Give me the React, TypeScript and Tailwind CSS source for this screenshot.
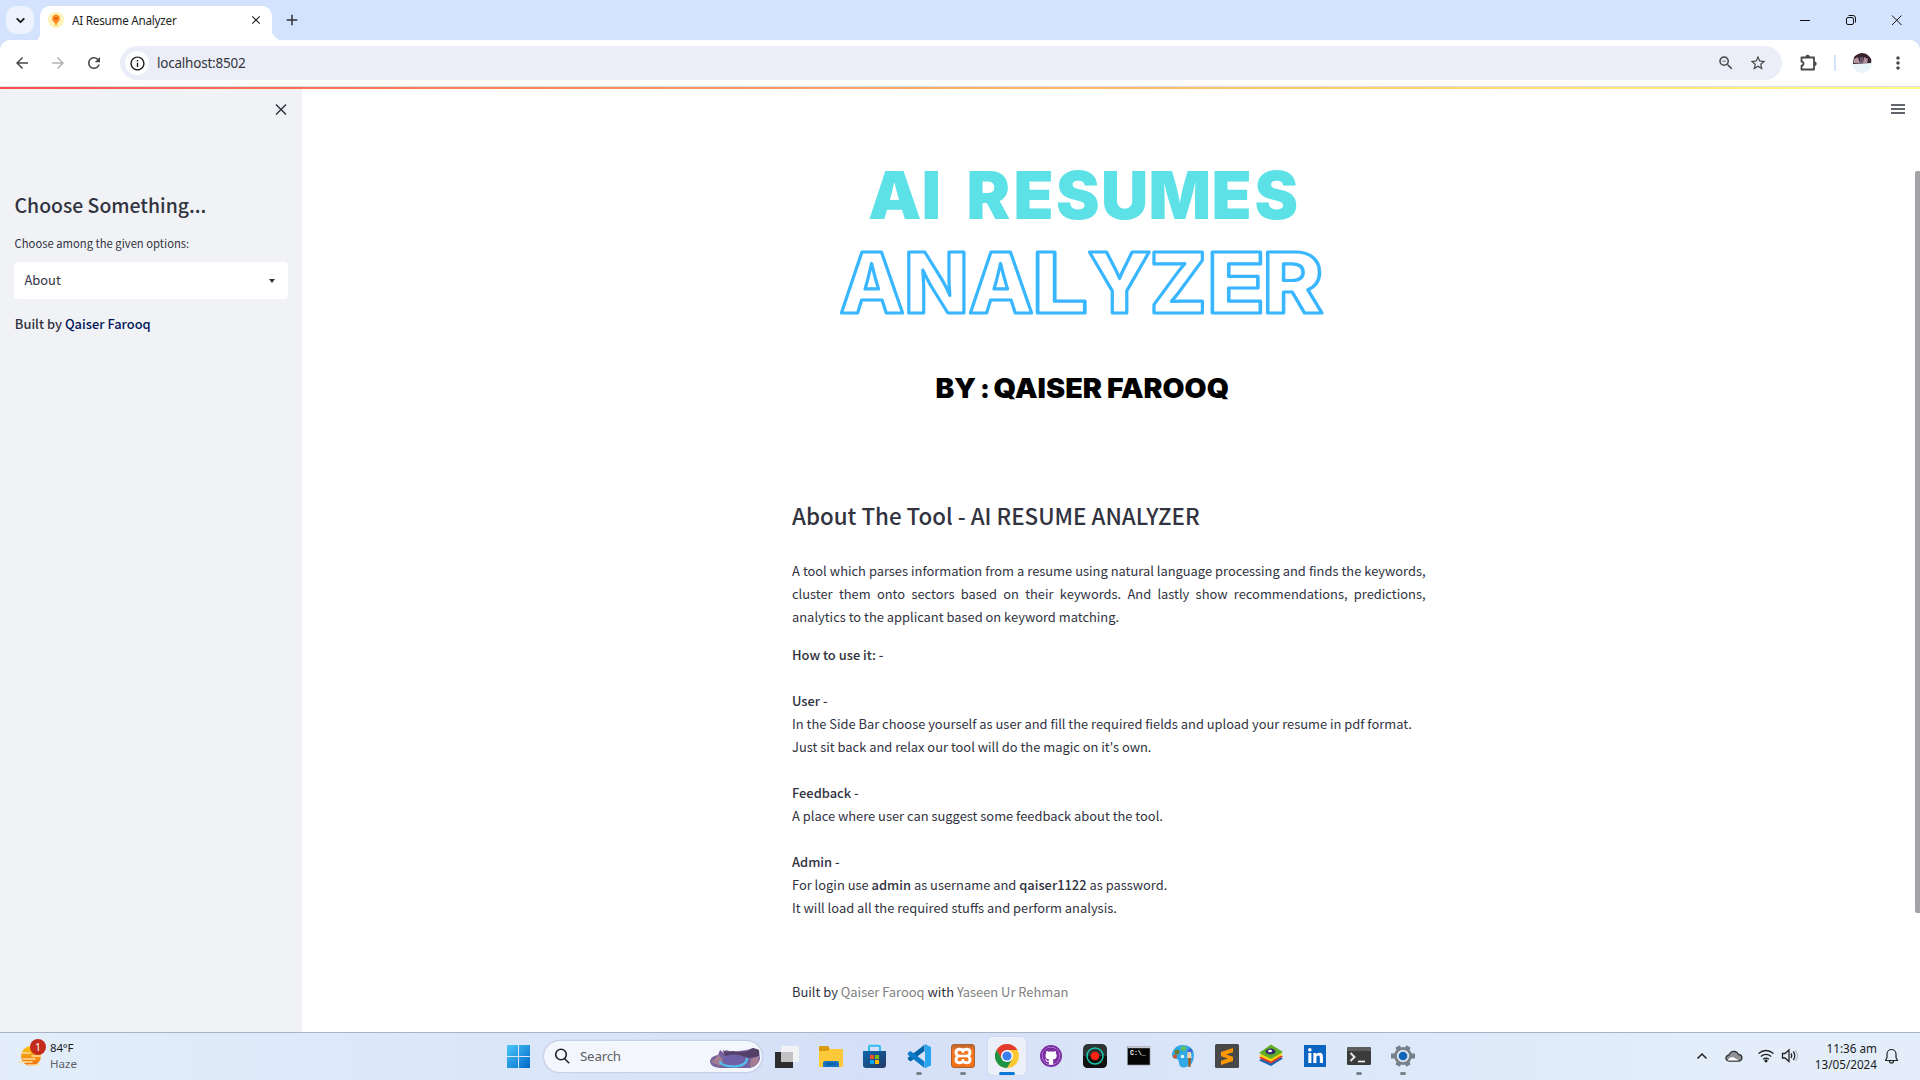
import { type ReactNode } from "react";
import { ChevronDown } from "lucide-react";
import { MdArrowBack, MdArrowForward, MdRefresh, MdClose, MdInfoOutline, MdStarBorder, MdZoomOut, MdMoreVert, MdAdd } from "react-icons/md";
import { FaGithub, FaLinkedinIn } from "react-icons/fa";

function TabStrip() {
  return (
    <div className="flex h-10 flex-none items-start bg-[#d3e3fd]">
      <div className="ml-1.5 mt-1.5 flex h-7 w-7 items-center justify-center rounded-[10px] bg-[#ecf3fe]">
        <ChevronDown className="h-[13px] w-[13px] text-[#1f1f1f]" strokeWidth={3.5} />
      </div>
      <div className="mt-[30px] h-2.5 w-1.5 rounded-br-[10px] bg-[#d3e3fd] shadow-[4px_4px_0_0_#fff]" />
      <div className="mt-1.5 flex h-[34px] w-[232px] items-center rounded-t-[10px] bg-white pb-1.5 pl-2">
        <svg className="h-4 w-4" viewBox="0 0 16 16">
          <circle cx="8" cy="8" r="8" fill="#fff2b8" />
          <path d="M8 2.500a4 4 0 0 0-2.300 7.200l.6 1.300h3.400l.6-1.300A4 4 0 0 0 8 2.500z" fill="#fb8c1e" />
          <path d="M6.200 5.500h3.600v2H6.200z" fill="#e8531f" />
          <path d="M6.600 11h2.800v1.600L8 13.800l-1.400-1.200z" fill="#fbb03b" />
        </svg>
        <span className="ml-2 flex-none pt-0.5 text-[11.700px] tracking-[-0.240px] text-[#1f1f1f]">AI Resume Analyzer</span>
        <span className="flex-1" />
        <MdClose className="mr-[9px] h-3.5 w-3.5 text-[#1f1f1f]" />
      </div>
      <div className="mt-[30px] h-2.5 w-2.5 rounded-bl-[10px] bg-[#d3e3fd] shadow-[-4px_4px_0_0_#fff]" />
      <MdAdd className="ml-px mt-[11px] h-[18px] w-[18px] text-[#303030]" />
      <div className="flex-1" />
      <svg className="mt-[10px] h-[20px] w-[120px]" viewBox="1790 10 120 20" fill="none" stroke="#111" strokeWidth="1">
        <path d="M1800 20.500h10" />
        <rect x="1846.500" y="17.500" width="7" height="7" rx="1.500" />
        <path d="M1848.500 15.500h4.500a2.500 2.500 0 0 1 2.500 2.500v4.500" />
        <path d="M1892 15.500l9.500 9.500M1901.500 15.500l-9.500 9.500" />
      </svg>
      <div className="w-[10px]" />
    </div>
  );
}

function Toolbar() {
  return (
    <div className="flex-none bg-[#d3e3fd]">
      <div className="flex h-[46px] items-center rounded-t-[10px] bg-white">
        <MdArrowBack className="ml-[13px] h-[18px] w-[18px] text-[#474747]" />
        <MdArrowForward className="ml-[18px] h-[18px] w-[18px] text-[#b4b4b4]" />
        <MdRefresh className="ml-[18px] h-[18px] w-[18px] text-[#474747]" />
        <div className="ml-[17px] flex h-[34px] w-[1662px] items-center rounded-full bg-[#ebeef8] pl-[5px]">
          <div className="flex h-6 w-6 items-center justify-center rounded-full bg-white">
            <MdInfoOutline className="h-[17px] w-[17px] text-[#1f1f1f]" />
          </div>
          <span className="ml-2 text-[13.500px] tracking-[-0.220px] text-[#34363b]">localhost:8502</span>
          <span className="flex-1" />
          <MdZoomOut className="mr-[14px] h-[18px] w-[18px] text-[#474747]" />
          <MdStarBorder className="mr-[15px] h-[18px] w-[18px] text-[#474747]" />
        </div>
        <svg className="ml-[16px] h-5 w-5" viewBox="0 0 20 20">
          <path d="M3.500 4.500H16V9.500V16.500H3.500V12.600A2 2 0 0 0 3.500 8.500Z" fill="none" stroke="#474747" strokeWidth="1.800" strokeLinejoin="round" />
          <path d="M7.500 4a2.200 2.200 0 0 1 4.400 0zM16.500 8.500a2.200 2.200 0 0 1 0 4.400z" fill="#474747" />
        </svg>
        <div className="ml-[16px] h-4 w-[2px] bg-[#d3e3fd]" />
        <svg className="ml-4 h-5 w-5" viewBox="0 0 20 20">
          <defs><clipPath id="avatar"><circle cx="10" cy="10" r="10" /></clipPath></defs>
          <g clipPath="url(#avatar)">
            <path d="M0 0h20v20H0z" fill="#e9f5f8" />
            <path d="M1 11L2 3 8 0h6l6 6-1 4z" fill="#38202c" />
            <path d="M2 6l4-2 2 6H2zM12 4l4 2-1 4h-4z" fill="#b4909a" />
            <path d="M8 4h3v6H8z" fill="#665771" />
          </g>
        </svg>
        <MdMoreVert className="ml-4 h-5 w-5 text-[#474747]" />
      </div>
      <div className="h-px bg-[#d8dde6]" />
    </div>
  );
}

function Sidebar() {
  return (
    <aside className="flex w-[302px] flex-none flex-col bg-[#f0f2f6] pl-3.5 pr-3.5 text-[#31333f]">
      <div className="flex h-[42px] items-center justify-end">
        <svg className="mb-px h-[13px] w-[13px]" viewBox="0 0 13 13" stroke="#31333f" strokeWidth="1.500"><path d="M1 1.500l10 10M11 1.500l-10 10" /></svg>
      </div>
      <h2 className="mt-[60px] self-start pl-[0.600px] text-[19.400px] leading-[28px] font-medium">Choose Something...</h2>
      <div className="mt-[14px] self-start pl-[0.600px] text-[11.250px] leading-[20px]">Choose among the given options:</div>
      <div className="mt-[9px] flex h-[37px] items-center justify-between rounded-[4px] bg-white pl-[10.500px] pr-[13px]">
        <span className="pb-0.5 text-[12.900px] leading-[23px]">About</span>
        <span className="h-0 w-0 border-x-[3.500px] border-t-[4px] border-x-transparent border-t-[#31333f]" />
      </div>
      <div className="mt-[13px] self-start pl-[0.800px] text-[12.900px] leading-[23px] font-medium">Built by <span className="text-[#021659]">Qaiser Farooq</span></div>
    </aside>
  );
}

function Banner() {
  return (
    <svg className="block h-[310px] w-[634px]" viewBox="792 130 634 310" fontFamily="Inter, sans-serif">
      <g fill="#5ce1e6" fontSize="65.500" fontWeight="900">
        <text x="868" y="218.700" textLength="73" lengthAdjust="spacingAndGlyphs">AI</text>
        <text x="966.500 1013.500 1056 1101 1148.500 1211.500 1254.500" y="218.700">RESUMES</text>
      </g>
      <g fontSize="84.500" fontWeight="800" fill="none" stroke="#38b6ff" strokeWidth="3.200" strokeLinejoin="round">
        <text x="839.500 904 968.500" y="312.800">ANA</text>
        <text x="1032" y="312.800" textLength="56" lengthAdjust="spacingAndGlyphs">L</text>
        <text x="1087.500 1149.500" y="312.800">YZ</text>
        <text x="1207" y="312.800" textLength="58" lengthAdjust="spacingAndGlyphs">E</text>
        <text x="1262.500" y="312.800" textLength="61" lengthAdjust="spacingAndGlyphs">R</text>
      </g>
      <g fontSize="26.500" fontWeight="900" fill="#000">
        <text x="935.500" y="397.700" textLength="40.500" lengthAdjust="spacingAndGlyphs">BY</text>
        <text x="980" y="397.700">:</text>
        <text x="993.500" y="397.700" textLength="108.500" lengthAdjust="spacingAndGlyphs">QAISER</text>
        <text x="1107" y="397.700" textLength="122" lengthAdjust="spacingAndGlyphs">FAROOQ</text>
      </g>
    </svg>
  );
}

function Line({ bold, children }: { bold?: boolean; children?: ReactNode }) {
  return <div className={bold ? "h-[23px] font-medium" : "h-[23px]"}>{children}</div>;
}

function Article() {
  return (
    <main className="flex flex-1">
      <div className="ml-[490px] flex w-[634px] flex-col pt-[41px] text-[12.900px] leading-[23px] whitespace-nowrap text-[#31333f]">
        <Banner />
        <h3 className="mt-[59px] text-[22.350px] leading-[32px] font-medium">About The Tool - AI RESUME ANALYZER</h3>
        <div className="mt-[28px] w-[633.500px]">
          <div className="h-[23px] text-justify tracking-[-0.020px] [text-align-last:justify]">A tool which parses information from a resume using natural language processing and finds the keywords,</div>
          <div className="h-[23px] text-justify [text-align-last:justify]">cluster them onto sectors based on their keywords. And lastly show recommendations, predictions,</div>
          <Line>analytics to the applicant based on keyword matching.</Line>
        </div>
        <div className="mt-[15px]">
          <Line bold>How to use it: -</Line>
          <Line />
          <Line bold>User -</Line>
          <Line>In the Side Bar choose yourself as user and fill the required fields and upload your resume in pdf format.</Line>
          <Line>Just sit back and relax our tool will do the magic on it's own.</Line>
          <Line />
          <Line bold>Feedback -</Line>
          <Line>A place where user can suggest some feedback about the tool.</Line>
          <Line />
          <Line bold>Admin -</Line>
          <Line>For login use <b className="font-medium">admin</b> as username and <b className="font-medium">qaiser1122</b> as password.</Line>
          <Line>It will load all the required stuffs and perform analysis.</Line>
        </div>
        <div className="mt-[61px]">
          <Line>Built by <span className="text-[#808080]">Qaiser Farooq</span> with <span className="text-[#808080]">Yaseen Ur Rehman</span></Line>
        </div>
      </div>
      <div className="flex-1" />
      <svg className="mt-[12px] mr-[9px] h-4 w-4" viewBox="0 0 16 16" stroke="#31333f" strokeWidth="1.500"><path d="M1 4h14M1 8h14M1 12h14" /></svg>
      <div className="w-[5px] flex-none pt-[82px]"><div className="h-[742px] w-[5px] rounded-l-[2px] bg-[#a3a4a8]" /></div>
    </main>
  );
}

function TaskButton({ children, running, active }: { children: ReactNode; running?: boolean; active?: boolean }) {
  return (
    <div className="flex w-11 flex-none justify-center">
      <div className={active ? "flex h-[38px] w-[38px] flex-col items-center rounded bg-[#ecf0fa] pt-[7px] shadow-[0_0_1px_#9aa5bd]" : "flex h-[38px] w-[38px] flex-col items-center pt-[7px]"}>
        {children}
        {running && <div className="mt-[4px] h-[3px] w-[6px] flex-none rounded-full bg-[#7c828c]" />}
        {active && <div className="mt-[4px] h-[3px] w-4 flex-none rounded-full bg-[#0a78d4]" />}
      </div>
    </div>
  );
}

function Ico({ children }: { children: ReactNode }) {
  return <svg className="h-6 w-6 flex-none" viewBox="0 0 24 24">{children}</svg>;
}

function Taskbar() {
  return (
    <footer className="flex h-12 flex-none items-center border-t border-[#a9b3c6] bg-linear-to-r from-[#e3eefa] from-0% via-[#d5e0f8] via-45% to-[#e3eefa] to-90% pb-px">
      <div className="flex w-[496px] items-center">
        <svg className="mb-[6px] ml-[18px] h-7 w-7" viewBox="0 0 28 28">
          <defs><linearGradient id="sun" x2="0" y2="1"><stop stopColor="#fcc419" /><stop offset="1" stopColor="#ef6c0c" /></linearGradient></defs>
          <circle cx="13" cy="17" r="10" fill="url(#sun)" />
          <path d="M4 14h8M14 17h9M5 20h12M1 23h13M10 26h11" stroke="#fbe0a0" strokeWidth="1.400" strokeLinecap="round" />
          <circle cx="20" cy="8" r="8" fill="#c42b1c" />
          <text x="20" y="12" fontSize="10.500" textAnchor="middle" fill="#fff">1</text>
        </svg>
        <div className="ml-1 text-[11.500px] leading-4 text-[#1b1b1b]">
          <div className="tracking-[-0.200px]">84°F</div>
          <div className="text-[#5d6167]">Haze</div>
        </div>
      </div>
      <div className="flex w-[48px]">
        <svg className="ml-[10px] h-6 w-6" viewBox="0 0 24 24">
          <defs><linearGradient id="win" x2="1" y2="1"><stop stopColor="#4cc8f8" /><stop offset="1" stopColor="#0067c8" /></linearGradient></defs>
          <path d="M1 1h11v11H1zM13 1h11v11H13zM1 13h11v11H1zM13 13h11v11H13z" fill="url(#win)" />
        </svg>
      </div>
      <div className="flex h-[31px] w-[218px] items-center rounded-full bg-[#f3f6fd] pl-[10px] shadow-[0_0_2px_#8d9cb8]">
        <svg className="h-4 w-4" viewBox="0 0 16 16" fill="none" stroke="#222" strokeWidth="1.600"><circle cx="7" cy="6.500" r="5.300" /><path d="M10.700 10.700l4 4" strokeLinecap="round" /></svg>
        <span className="ml-[10px] pt-px text-[13.300px] tracking-[-0.200px] text-[#5d5f63]">Search</span>
        <span className="flex-1" />
        <svg className="mr-[1px] mt-1 h-[22px] w-[52px]" viewBox="0 0 52 22">
          <path d="M1 14q1-5 8-6l2-5 4 3 2-3 7 2 6-1 8-1 6-2 6 2 1 9q-2 7-10 9H14Q1 21 1 14z" fill="#77649f" />
          <path d="M14 3l4 2 6-1 6 1 9-1 5-3 6 2v6l-9 2-13-3-12 1z" fill="#554067" />
          <path d="M2 15l8-7 4 5-3 6zM42 12l8-3-1 7-8 5z" fill="#a77d93" />
          <ellipse cx="25" cy="12.500" rx="11" ry="5" fill="#6d5fa8" />
          <path d="M11 14q0 5 14 5.500 13-.5 13-8.500" fill="none" stroke="#4ec4f4" strokeWidth="2" />
        </svg>
      </div>
      <div className="ml-[3px] flex">
        <TaskButton><Ico><path d="M0 8h18v16H0z" fill="#2d2d2d" /><path d="M6 2h18v16H6z" fill="#f1f2f4" /><path d="M6 8h12v10H6z" fill="#c2c2c4" /></Ico></TaskButton>
        <TaskButton><Ico><path d="M0 3q0-1 1-1h8l2 3h12q1 0 1 1v17H0z" fill="#fdc938" /><path d="M0 3q0-1 1-1h8l1.500 2.500L9 7H0z" fill="#d99a0e" /><path d="M4 23v-4q0-2 2-2h12q2 0 2 2v4z" fill="#1673c0" /><path d="M7 20h10" stroke="#0c549a" strokeWidth="1.500" /></Ico></TaskButton>
        <TaskButton><Ico>
          <defs><linearGradient id="store" x2="1" y2="1"><stop stopColor="#0b66ae" /><stop offset="1" stopColor="#243a63" /></linearGradient></defs>
          <path d="M6 8V3q0-1.200 1.200-1.200h8.600q1.200 0 1.200 1.200v5" fill="none" stroke="#32bdf2" strokeWidth="2" /><path d="M0 7h23v14q0 3-3 3H3q-3 0-3-3z" fill="url(#store)" />
          <path d="M7 11h4v4H7z" fill="#f25022" /><path d="M12 11h4v4h-4z" fill="#7fba00" /><path d="M7 16h4v4H7z" fill="#00a4ef" /><path d="M12 16h4v4h-4z" fill="#ffb900" />
        </Ico></TaskButton>
        <TaskButton running><Ico><path d="M17.500 7L3.500 17.500.8 15.300v-1.500L17.500.800z" fill="#0065a9" /><path d="M17.500 17.500L3.500 7 .8 9v1.700L17.500 24z" fill="#0a7bc8" /><path d="M17 .5q.6-.5 1.300-.2L24 3v18.500l-5.700 2.600q-.7.200-1.300-.4l1-.7V1z" fill="#29a4ee" /></Ico></TaskButton>
        <TaskButton running><Ico>
          <defs><linearGradient id="xampp" x2="0" y2="1"><stop stopColor="#b8602e" /><stop offset=".25" stopColor="#f07a2a" /><stop offset="1" stopColor="#f56f14" /></linearGradient></defs>
          <rect x=".5" y=".5" width="23" height="23" rx="2.500" fill="url(#xampp)" stroke="#b0602a" />
          <path d="M12 7.500Q11.500 5.200 8.500 5.200 5 5.200 5 8.500 5 11 7.500 12 5 13 5 15.500 5 18.800 8.500 18.800 11.500 18.800 12 16.500 12.500 18.800 15.500 18.800 19 18.800 19 15.500 19 13 16.500 12 19 11 19 8.500 19 5.200 15.500 5.200 12.500 5.200 12 7.500z" fill="none" stroke="#fff" strokeWidth="2.900" strokeLinejoin="round" />
          <path d="M7.500 12h9" stroke="#fff" strokeWidth="2.500" />
        </Ico></TaskButton>
        <TaskButton active><Ico>
          <circle cx="12" cy="12" r="12" fill="#fcc934" />
          <path d="M12 6h10.400A12 12 0 0 0 1.600 6L6.800 15z" fill="#e33b2e" />
          <path d="M1.600 6A12 12 0 0 0 12 24l5.200-9L12 17 6.800 15z" fill="#1e9346" />
          <circle cx="12" cy="12" r="6" fill="#fff" /><circle cx="12" cy="12" r="4.600" fill="#3a7ff0" />
        </Ico></TaskButton>
        <TaskButton><div className="flex h-6 w-6 items-center justify-center"><div className="flex h-[22px] w-[22px] items-center justify-center rounded-full border-[2.500px] border-[#7c2fa5] bg-white"><FaGithub className="h-[18px] w-[18px] flex-none text-[#7c2fa5]" /></div></div></TaskButton>
        <TaskButton><Ico><rect width="24" height="24" rx="5" fill="#2e3433" /><path d="M0 12h24v7q0 5-5 5H5q-5 0-5-5z" fill="#111" /><circle cx="12" cy="12" r="8" fill="none" stroke="#18c9ad" strokeWidth="1.500" /><circle cx="12" cy="12" r="4.300" fill="#fb2412" /></Ico></TaskButton>
        <TaskButton><Ico><path d="M.5 2.500H23v18.500H.5z" fill="#050505" stroke="#8e9197" strokeWidth=".7" /><path d="M.5 2.200H23v2H.5z" fill="#c7ccd3" /><text x="3" y="11" fontSize="6.500" fontWeight="bold" fontFamily="Liberation Mono, monospace" fill="#fff">C:\_</text></Ico></TaskButton>
        <TaskButton><Ico><path d="M12 1C5 1 1 6 1 11q0 3 2 3.500 4 0 4.500 2 .5 2 1 4.500 1 3 5 2.500Q23 22 23 11 22 1 12 1z" fill="#31a9e8" /><circle cx="12.500" cy="4.500" r="2.500" fill="#62be53" /><circle cx="6" cy="8" r="2.500" fill="#6c7a30" /><circle cx="4" cy="12.500" r="2" fill="#dc4f24" /><circle cx="19" cy="7" r="2.500" fill="#3c67d4" /><circle cx="11.500" cy="12.500" r="1.800" fill="#e7f5fd" /><path d="M16.500 8h3.500l.5 6h-4.500z" fill="#ecd3ac" /><path d="M17 14h3l-.5 9h-2z" fill="#a65c1c" /></Ico></TaskButton>
        <TaskButton><Ico><rect width="24" height="24" rx="1.500" fill="#484848" /><path d="M18 4v4.200l-7 2.300 7 2.200v4.300L6 21v-4.300l7-2.300-7-2.200V8z" fill="#ff9800" /></Ico></TaskButton>
        <TaskButton><Ico><path d="M12 8l12 6.500L12 22 0 16.500z" fill="#1b67b4" /><path d="M12 6l12 6.500-12 7L0 14z" fill="#e2362b" /><path d="M12 4l12 6.500-12 7L0 12z" fill="#fbd017" /><path d="M12 .5L24 8l-12 7L0 9z" fill="#5fae25" /><ellipse cx="11.500" cy="7.500" rx="5" ry="3" fill="#332c6c" /><ellipse cx="11" cy="7" rx="2" ry="1.200" fill="#fff" /></Ico></TaskButton>
        <TaskButton><div className="mt-px flex h-[22px] w-[22px] items-center justify-center bg-[#0a66c2]"><FaLinkedinIn className="h-[17px] w-[17px] text-white" /></div></TaskButton>
        <TaskButton running><Ico><rect y="3" width="24" height="18" rx="1.500" fill="#3b3b3b" /><path d="M0 7V4.500Q0 3 1.500 3h21Q24 3 24 4.500V7z" fill="#5d5d5d" /><path d="M3.500 9l4 4-4 4" fill="none" stroke="#e6e6e6" strokeWidth="2" /><path d="M11 17.500h7" stroke="#fff" strokeWidth="1.600" /></Ico></TaskButton>
        <TaskButton running><Ico>
          <circle cx="12" cy="12" r="9" fill="#76808b" />
          <path d="M6.500 2.500l11 19M17.500 2.500l-11 19M0 12h24" stroke="#76808b" strokeWidth="5" />
          <circle cx="12" cy="12" r="6.200" fill="#dfe3e8" /><circle cx="12" cy="12" r="4.300" fill="#0d66b8" />
        </Ico></TaskButton>
      </div>
      <div className="flex-1" />
      <svg className="h-6 w-[108px]" viewBox="1692 1044 108 24" fill="none" stroke="#222" strokeWidth="1.300">
        <path d="M1697.500 1058.500l4.500-4.500 4.500 4.500" strokeWidth="1.500" />
        <path d="M1729 1061q-3.500-.5-3-3.500.5-2 3-2.500 2-4.500 6-3.500 2.500.5 3.500 3 3.500.5 3.500 3.500-.5 3-3 3z" fill="#909295" stroke="#333" />
        <path d="M1728 1060.500q0-3 5-3.500l6 3.500z" fill="#fff" stroke="none" />
        <path d="M1758.500 1053.500q7.500-6 15 0M1760.800 1056.500q5.200-4.200 10.400 0M1763 1059.300q3-2.500 6 0" /><circle cx="1766" cy="1060.800" r="1" fill="#222" />
        <path d="M1782.500 1053.500h2.500l4-3.500v11.500l-4-3.500h-2.500z" /><path d="M1791 1053.500q1.500 2 0 4.500M1793.300 1051.500q3 4 0 8.500" /><path d="M1795.500 1050q4 6 0 11" stroke="#b9c1cb" />
      </svg>
      <div className="w-[77px] text-right text-[11.700px] leading-4 text-[#1b1b1b]">
        <div>11:36 am</div>
        <div>13/05/2024</div>
      </div>
      <svg className="ml-[7px] mr-[21px] h-4 w-[15px]" viewBox="0 0 15 16" fill="none" stroke="#222" strokeWidth="1.200"><path d="M1.500 12.500h12l-1.500-3V6a4.500 4.500 0 0 0-9 0v3.500zM5.500 13a2 2 0 0 0 4 0" strokeLinejoin="round" /></svg>
    </footer>
  );
}

export default function App() {
  return (
    <div className="flex h-[1080px] w-[1920px] flex-col overflow-hidden bg-white font-['Noto_Sans',sans-serif]">
      <TabStrip />
      <Toolbar />
      <div className="flex min-h-0 flex-1 flex-col overflow-hidden font-['Noto_Sans_CJK_JP','Noto_Sans_CJK_SC',sans-serif]">
        <div className="h-[2px] flex-none bg-linear-to-r from-[#ff4b4b] to-[#fffd80]" />
        <div className="flex min-h-0 flex-1">
          <Sidebar />
          <Article />
        </div>
      </div>
      <Taskbar />
    </div>
  );
}
